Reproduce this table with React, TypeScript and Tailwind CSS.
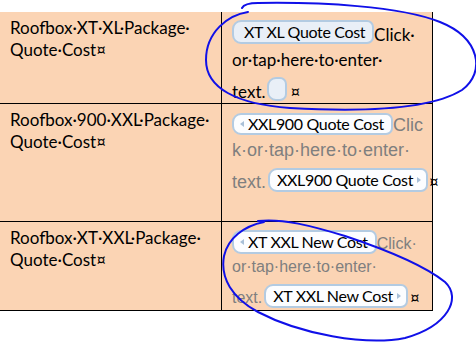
import React from "react";

const body = "font-['Lato','Open_Sans',sans-serif] text-[17px] text-black";
const tagText = "font-['Lato','Open_Sans',sans-serif] text-[16px] tracking-[-0.35px] text-black leading-[20px]";
const gray = "font-['Liberation_Sans',Arial,sans-serif] text-[#7f7f7f]";

function Arrow({ dir }: { dir: "left" | "right" }) {
  return dir === "left" ? (
    <span className="w-0 h-0 border-y-[3px] border-y-transparent border-r-[4px] border-r-[#a9c0d8]" />
  ) : (
    <span className="w-0 h-0 border-y-[3px] border-y-transparent border-l-[4px] border-l-[#a9c0d8]" />
  );
}

function Tag({
  label,
  arrow,
  filled,
  className = "",
}: {
  label?: string;
  arrow?: "left" | "right";
  filled?: boolean;
  className?: string;
}) {
  return (
    <span
      className={`flex items-center shrink-0 border-2 border-[#b3cbe2] rounded-l-[9px] rounded-r-[7px] ${
        filled ? "bg-[#e9eff7]" : "bg-[#fcfdff]"
      } ${className}`}
    >
      {arrow === "left" && <Arrow dir="left" />}
      {label && <span className={tagText}>{label}</span>}
      {arrow === "right" && <Arrow dir="right" />}
    </span>
  );
}

function LeftCell({ first, second }: { first: string; second: string }) {
  return (
    <div className={`w-[222px] shrink-0 border-r border-black pl-[10px] pt-[5px] ${body} leading-[22px]`}>
      <div>{first}</div>
      <div>{second}</div>
    </div>
  );
}

export default function App() {
  return (
    <div className="relative w-[476px] h-[343px] bg-white overflow-hidden">
      <div className="mt-[12px] w-[433px] bg-[#fbd4b4]">
        {/* row 1 */}
        <div className="flex h-[92px] border-b border-black">
          <LeftCell first="Roofbox·XT·XL·Package·" second="Quote·Cost¤" />
          <div className="flex-1 border-r border-black pl-[10px]">
            <div className="flex items-end h-[25px] mt-[8px]">
              <Tag label="XT XL Quote Cost" filled className="h-[24px] self-start pl-[10px] pr-[7px]" />
              <span className={`${body} leading-[20px]`}>Click·</span>
            </div>
            <div className={`${body} leading-[20px] mt-[5px]`}>or·tap·here·to·enter·</div>
            <div className="flex items-end h-[25px] mt-[7px]">
              <span className={`${body} leading-[20px]`}>text.</span>
              <Tag filled className="w-[20px] h-[24px] self-start ml-[1px]" />
              <span className={`${body} leading-[20px] ml-[4px] text-[13px]`}>¤</span>
            </div>
          </div>
        </div>

        {/* row 2 */}
        <div className="flex h-[118px] border-b border-black">
          <LeftCell first="Roofbox·900·XXL·Package·" second="Quote·Cost¤" />
          <div className="flex-1 border-r border-black pl-[10px]">
            <div className="flex items-end h-[22px] mt-[9px]">
              <Tag label="XXL900 Quote Cost" arrow="left" className="h-[22px] gap-[4px] pl-[6px] pr-[7px]" />
              <span className={`${gray} text-[18px] leading-[20px]`}>Clic</span>
            </div>
            <div className={`${gray} text-[18px] leading-[20px] mt-[5px]`}>k·or·tap·here·to·enter·</div>
            <div className="flex items-end h-[24px] mt-[8px]">
              <span className={`${gray} text-[18px] leading-[20px]`}>text.</span>
              <Tag label="XXL900 Quote Cost" arrow="right" className="h-[24px] gap-[4px] pl-[7px] pr-[5px] ml-[2px]" />
              <span className={`${body} leading-[20px] ml-[1px] text-[13px]`}>¤</span>
            </div>
          </div>
        </div>

        {/* row 3 */}
        <div className="flex h-[89px] border-b border-black">
          <LeftCell first="Roofbox·XT·XXL·Package·" second="Quote·Cost¤" />
          <div className="flex-1 border-r border-black pl-[10px]">
            <div className="flex items-end h-[24px] mt-[8px]">
              <Tag label="XT XXL New Cost" arrow="left" className="h-[24px] gap-[4px] pl-[6px] pr-[7px]" />
              <span className={`${gray} text-[16px] leading-[20px]`}>Click·</span>
            </div>
            <div className={`${gray} text-[16px] leading-[20px] mt-[3px]`}>or·tap·here·to·enter·</div>
            <div className="flex items-end h-[24px] mt-[7px]">
              <span className={`${gray} text-[16px] leading-[20px]`}>text.</span>
              <Tag label="XT XXL New Cost" arrow="right" className="h-[24px] gap-[4px] pl-[7px] pr-[5px] ml-[2px]" />
              <span className={`${body} leading-[20px] ml-[2px] text-[13px]`}>¤</span>
            </div>
          </div>
        </div>
      </div>

      {/* hand-drawn annotation rings */}
      <svg
        className="absolute inset-0 pointer-events-none"
        width="476"
        height="343"
        viewBox="0 0 476 343"
        fill="none"
        stroke="#1010e8"
        strokeWidth="2"
        strokeLinecap="round"
      >
        <path d="M248 12 C228 15 206 32 206 60 C206 88 236 104 290 108 C360 112 430 110 462 90 C486 72 480 38 440 22 C400 6 320 2 258 3 C250 3 244 4 242 8" />
        <path d="M258 221 C282 218 312 226 345 236 C375 246 420 262 445 282 C462 298 448 326 405 338 C365 346 300 334 258 312 C232 298 220 278 224 256 C228 238 244 226 264 222" />
      </svg>
    </div>
  );
}
